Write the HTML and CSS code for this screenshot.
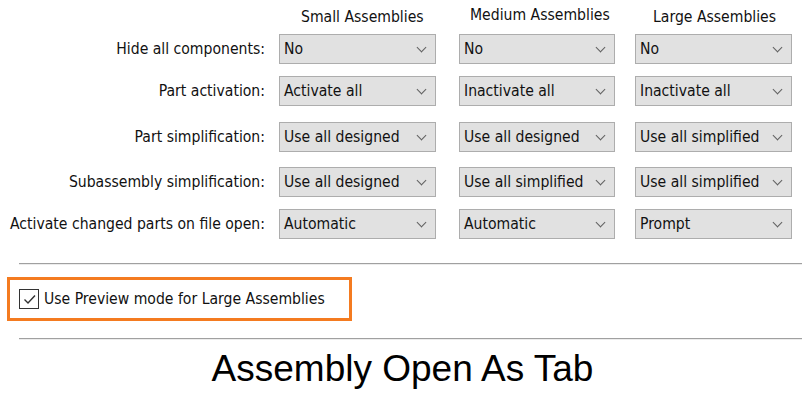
FILE: index.html
```html
<!DOCTYPE html>
<html>
<head>
<meta charset="utf-8">
<link rel="stylesheet" href="styles.css">
</head>
<body>
<div class="page">
  <div class="grid">
    <div class="cell"></div>
    <div class="hdr">Small Assemblies</div>
    <div class="hdr hdr-mid">Medium Assemblies</div>
    <div class="hdr hdr-large">Large Assemblies</div>

    <div class="label">Hide all components:</div>
    <div class="cell"><div class="combo w157"><span>No</span><i class="arrow"></i></div></div>
    <div class="cell"><div class="combo w156"><span>No</span><i class="arrow"></i></div></div>
    <div class="cell"><div class="combo w157"><span>No</span><i class="arrow"></i></div></div>

    <div class="label">Part activation:</div>
    <div class="cell"><div class="combo w157"><span>Activate all</span><i class="arrow"></i></div></div>
    <div class="cell"><div class="combo w156"><span>Inactivate all</span><i class="arrow"></i></div></div>
    <div class="cell"><div class="combo w157"><span>Inactivate all</span><i class="arrow"></i></div></div>

    <div class="label">Part simplification:</div>
    <div class="cell"><div class="combo w157"><span>Use all designed</span><i class="arrow"></i></div></div>
    <div class="cell"><div class="combo w156"><span>Use all designed</span><i class="arrow"></i></div></div>
    <div class="cell"><div class="combo w157"><span>Use all simplified</span><i class="arrow"></i></div></div>

    <div class="label">Subassembly simplification:</div>
    <div class="cell"><div class="combo w157"><span>Use all designed</span><i class="arrow"></i></div></div>
    <div class="cell"><div class="combo w156"><span>Use all simplified</span><i class="arrow"></i></div></div>
    <div class="cell"><div class="combo w157"><span>Use all simplified</span><i class="arrow"></i></div></div>

    <div class="label">Activate changed parts on file open:</div>
    <div class="cell"><div class="combo w157"><span>Automatic</span><i class="arrow"></i></div></div>
    <div class="cell"><div class="combo w156"><span>Automatic</span><i class="arrow"></i></div></div>
    <div class="cell"><div class="combo w157"><span>Prompt</span><i class="arrow"></i></div></div>
  </div>

  <div class="sep sep-top"></div>

  <div class="highlight">
    <span class="checkbox">
      <svg width="17" height="17" viewBox="0 0 17 17"><path d="M3.5 8.5 L7 12 L14 4.5" fill="none" stroke="#333" stroke-width="1.4"/></svg>
    </span>
    <span class="cb-label">Use Preview mode for Large Assemblies</span>
  </div>

  <div class="sep sep-bottom"></div>

  <div class="title">Assembly Open As Tab</div>
</div>
</body>
</html>
```

FILE: styles.css
```css
html, body {
  margin: 0;
  padding: 0;
  background: #ffffff;
}

.page {
  width: 805px;
  height: 415px;
  font-family: "DejaVu Sans", sans-serif;
  font-stretch: condensed;
  font-size: 15.6px;
  color: #111;
}

.grid {
  display: grid;
  grid-template-columns: 279px 180px 176px 157px;
  grid-template-rows: 34px 42px 46px 45px 42px 30px;
  align-items: start;
}

.hdr {
  height: 34px;
  display: flex;
  align-items: center;
  padding-bottom: 1px;
  box-sizing: border-box;
  justify-content: flex-start;
  padding-left: 22px;
  white-space: nowrap;
}
.hdr-mid {
  padding-left: 11px;
  padding-bottom: 5px;
}
.hdr-large {
  padding-left: 18px;
}

.label {
  height: 30px;
  display: flex;
  align-items: center;
  justify-content: flex-end;
  padding-right: 14px;
  white-space: nowrap;
}

.combo {
  height: 30px;
  box-sizing: border-box;
  background: #e1e1e1;
  border: 1px solid #adadad;
  display: flex;
  align-items: center;
  justify-content: space-between;
  padding: 0 8px 0 4px;
  white-space: nowrap;
}
.w157 { width: 157px; }
.w156 { width: 156px; }

.arrow {
  display: block;
  width: 6px;
  height: 6px;
  border-right: 1px solid #606060;
  border-bottom: 1px solid #606060;
  transform: rotate(45deg);
  margin-top: -4px;
  margin-right: 2px;
}

.sep {
  margin-left: 19px;
  width: 783px;
  height: 1px;
  background: #a0a0a0;
  border-bottom: 1px solid #ececec;
}
.sep-top {
  margin-top: 24px;
}

.highlight {
  margin-top: 12px;
  margin-left: 7px;
  width: 345px;
  height: 44px;
  box-sizing: border-box;
  border: 3px solid #f47b20;
  display: flex;
  align-items: center;
  padding-left: 9px;
  gap: 5px;
}

.checkbox {
  width: 20px;
  height: 20px;
  box-sizing: border-box;
  border: 1px solid #333;
  background: #fff;
  display: flex;
  align-items: center;
  justify-content: center;
}

.sep-bottom {
  margin-top: 17px;
}

.title {
  margin-top: 8px;
  text-align: center;
  font-family: "Liberation Sans", Arial, sans-serif;
  font-stretch: normal;
  font-size: 37px;
  line-height: 42px;
  color: #000;
}
```
